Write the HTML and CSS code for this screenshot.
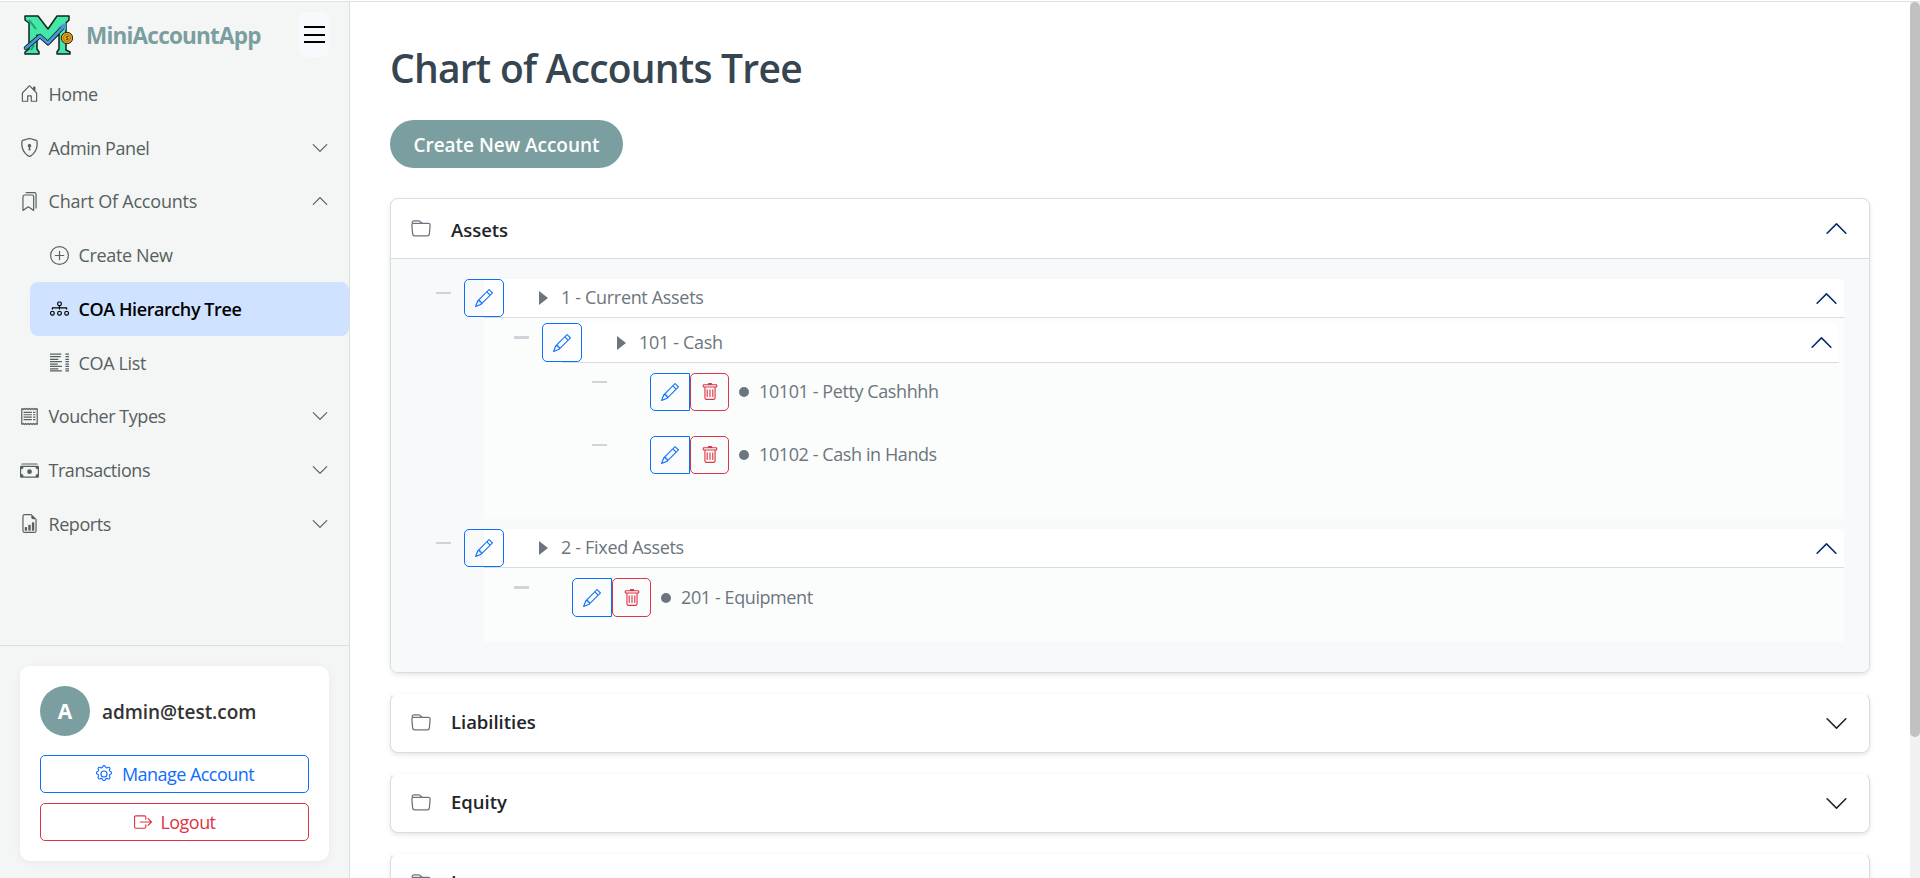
FILE: index.html
```html
<!DOCTYPE html>
<html lang="en">
<head>
<meta charset="utf-8">
<title>Chart of Accounts Tree - MiniAccountApp</title>
<link rel="stylesheet" href="styles.css">
</head>
<body>
<svg class="sprite" aria-hidden="true">
  <symbol id="house" viewBox="0 0 16 16"><path d="M8.354 1.146a.5.5 0 0 0-.708 0l-6 6A.5.5 0 0 0 1.5 7.5v7a.5.5 0 0 0 .5.5h4.5a.5.5 0 0 0 .5-.5v-4h2v4a.5.5 0 0 0 .5.5H14a.5.5 0 0 0 .5-.5v-7a.5.5 0 0 0-.146-.354L13 5.793V2.5a.5.5 0 0 0-.5-.5h-1a.5.5 0 0 0-.5.5v1.293zM2.5 14V7.707l5.5-5.5 5.5 5.5V14H10v-4a.5.5 0 0 0-.5-.5h-3a.5.5 0 0 0-.5.5v4z"/></symbol>
  <symbol id="shield" viewBox="0 0 16 16"><path d="M5.338 1.59a61 61 0 0 0-2.837.856.48.48 0 0 0-.328.39c-.554 4.157.726 7.19 2.253 9.188a10.7 10.7 0 0 0 2.287 2.233c.346.244.652.42.893.533q.18.085.293.118a1 1 0 0 0 .101.025 1 1 0 0 0 .1-.025q.114-.034.294-.118c.24-.113.547-.29.893-.533a10.7 10.7 0 0 0 2.287-2.233c1.527-1.997 2.807-5.031 2.253-9.188a.48.48 0 0 0-.328-.39c-.651-.213-1.75-.56-2.837-.855C9.552 1.29 8.531 1.067 8 1.067c-.53 0-1.552.223-2.662.524zM5.072.56C6.157.265 7.31 0 8 0s1.843.265 2.928.56c1.11.3 2.229.655 2.887.87a1.54 1.54 0 0 1 1.044 1.262c.596 4.477-.787 7.795-2.465 9.99a11.8 11.8 0 0 1-2.517 2.453 7 7 0 0 1-1.048.625c-.28.132-.581.24-.829.24s-.548-.108-.829-.24a7 7 0 0 1-1.048-.625 11.8 11.8 0 0 1-2.517-2.453C1.928 10.487.545 7.169 1.141 2.692A1.54 1.54 0 0 1 2.185 1.43 63 63 0 0 1 5.072.56z"/><path d="M9.5 6.5a1.5 1.5 0 0 1-1 1.415l.385 1.99a.5.5 0 0 1-.491.595h-.788a.5.5 0 0 1-.49-.595l.384-1.99a1.5 1.5 0 1 1 2-1.415z"/></symbol>
  <symbol id="bookmarks" viewBox="0 0 16 16"><path d="M2 4a2 2 0 0 1 2-2h6a2 2 0 0 1 2 2v11.5a.5.5 0 0 1-.777.416L7 13.101l-4.223 2.815A.5.5 0 0 1 2 15.5zm2-1a1 1 0 0 0-1 1v10.566l3.723-2.482a.5.5 0 0 1 .554 0L11 14.566V4a1 1 0 0 0-1-1z"/><path d="M4.268 1H12a1 1 0 0 1 1 1v11.768l.223.148A.5.5 0 0 0 14 13.5V2a2 2 0 0 0-2-2H6a2 2 0 0 0-1.732 1"/></symbol>
  <symbol id="plus" viewBox="0 0 16 16"><path d="M8 15A7 7 0 1 1 8 1a7 7 0 0 1 0 14m0 1A8 8 0 1 0 8 0a8 8 0 0 0 0 16"/><path d="M8 4a.5.5 0 0 1 .5.5v3h3a.5.5 0 0 1 0 1h-3v3a.5.5 0 0 1-1 0v-3h-3a.5.5 0 0 1 0-1h3v-3A.5.5 0 0 1 8 4"/></symbol>
  <symbol id="diagram" viewBox="0 0 16 16"><path fill-rule="evenodd" d="M6 3.5A1.5 1.5 0 0 1 7.500 2h1A1.500 1.500 0 0 1 10 3.500v1A1.500 1.500 0 0 1 8.500 6v1H14a.5.5 0 0 1 .5.5v1a.5.5 0 0 1-1 0V8h-5v.5a.5.5 0 0 1-1 0V8h-5v.5a.5.5 0 0 1-1 0v-1A.5.5 0 0 1 2 7h5.500V6A1.500 1.500 0 0 1 6 4.500zM8.500 5a.5.5 0 0 0 .5-.5v-1a.5.5 0 0 0-.5-.5h-1a.5.5 0 0 0-.5.5v1a.5.5 0 0 0 .5.5z"/><g fill="none" stroke="currentColor"><rect x=".5" y="10.500" width="3" height="3" rx="1"/><rect x="6.500" y="10.500" width="3" height="3" rx="1"/><rect x="12.500" y="10.500" width="3" height="3" rx="1"/></g></symbol>
  <symbol id="list" viewBox="0 0 16 16"><path d="M0 .5h9.500v1H0zM0 2.500h9v1H0zM0 4.800h7v1H0zM0 6.800h10v1H0zM0 8.800h6.500v1H0zM0 10.800h10v1H0zM0 12.800h7v1H0zM0 14.600h10v1H0zM13 .5h3v1h-3zM13 2.500h3v1h-3zM13 4.800h3v1h-3zM13 6.800h3v1h-3zM13 8.800h3v1h-3zM13 10.800h3v1h-3zM13 12.800h3v1h-3zM13 14.600h3v1h-3z"/></symbol>
  <symbol id="receipt" viewBox="0 0 16 16"><path fill="none" stroke="currentColor" d="M1.500 1.200v13.600M14.500 1.200v13.600"/><path fill="none" stroke="currentColor" stroke-width="1.100" d="M1.500 1.300l1.100.8 1.100-.8 1.100.8 1.100-.8 1.100.8 1-.8 1.100.8 1.100-.8 1.100.8 1.100-.8 1.100.8 1-.8M1.500 14.700l1.100-.8 1.100.8 1.100-.8 1.100.8 1.100-.8 1 .8 1.100-.8 1.100.8 1.100-.8 1.100.8 1.100-.8 1 .8"/><path d="M3 4h7v1H3zm0 2h7v1H3zm0 2h7v1H3zm0 2.200h7v1H3zM11 4h2v1h-2zm0 2h2v1h-2zm0 2h2v1h-2zm0 2.200h2v1h-2z"/></symbol>
  <symbol id="cash" viewBox="0 0 16 16"><path d="M1 3a1 1 0 0 1 1-1h12a1 1 0 0 1 1 1zm7 8a2 2 0 1 0 0-4 2 2 0 0 0 0 4"/><path d="M0 5a1 1 0 0 1 1-1h14a1 1 0 0 1 1 1v8a1 1 0 0 1-1 1H1a1 1 0 0 1-1-1zm3 0a2 2 0 0 1-2 2v4a2 2 0 0 1 2 2h10a2 2 0 0 1 2-2V7a2 2 0 0 1-2-2z"/></symbol>
  <symbol id="report" viewBox="0 0 16 16"><path d="M10 13.500a.5.5 0 0 0 .5.5h1a.5.5 0 0 0 .5-.5v-6a.5.5 0 0 0-.5-.5h-1a.5.5 0 0 0-.5.5zm-2.500.5a.5.5 0 0 1-.5-.5v-4a.5.5 0 0 1 .5-.5h1a.5.5 0 0 1 .5.5v4a.5.5 0 0 1-.5.5zm-3 0a.5.5 0 0 1-.5-.5v-2a.5.5 0 0 1 .5-.5h1a.5.5 0 0 1 .5.5v2a.5.5 0 0 1-.5.5z"/><path d="M14 14V4.500L9.500 0H4a2 2 0 0 0-2 2v12a2 2 0 0 0 2 2h8a2 2 0 0 0 2-2M9.500 3A1.500 1.500 0 0 0 11 4.500h2V14a1 1 0 0 1-1 1H4a1 1 0 0 1-1-1V2a1 1 0 0 1 1-1h5.500z"/></symbol>
  <symbol id="gear" viewBox="0 0 16 16"><g fill="none" stroke="currentColor" stroke-linejoin="round"><circle cx="8" cy="8" r="2.700"/><path d="M6.900 1.200q1.100-1.200 2.200 0l.2.500q.5 1.200 1.700.7l.5-.3q1.600-.4 1.800 1.200l-.4.9q-.4 1.100.7 1.600l.5.200q1.300 1 0 2l-.5.3q-1.100.5-.7 1.600l.4.900q0 1.700-1.700 1.600l-.6-.3q-1.200-.5-1.700.6l-.2.600q-1.100 1.300-2.200 0l-.2-.6q-.5-1.100-1.700-.6l-.6.3q-1.600.2-1.700-1.500l.4-.9q.4-1.200-.7-1.700l-.5-.3q-1.300-1 0-2l.5-.2q1.100-.5.7-1.600l-.3-.9q.2-1.600 1.700-1.200l.5.300q1.200.5 1.700-.7z"/></g></symbol>
  <symbol id="logout" viewBox="0 0 16 16"><path fill-rule="evenodd" d="M10 12.500a.5.5 0 0 1-.5.5h-8a.5.5 0 0 1-.5-.5v-9a.5.5 0 0 1 .5-.5h8a.5.5 0 0 1 .5.5v2a.5.5 0 0 0 1 0v-2A1.500 1.500 0 0 0 9.500 2h-8A1.500 1.500 0 0 0 0 3.500v9A1.500 1.500 0 0 0 1.500 14h8a1.500 1.500 0 0 0 1.500-1.500v-2a.5.5 0 0 0-1 0z"/><path fill-rule="evenodd" d="M15.854 8.354a.5.5 0 0 0 0-.708l-3-3a.5.5 0 0 0-.708.708L14.293 7.500H5.500a.5.5 0 0 0 0 1h8.793l-2.147 2.146a.5.5 0 0 0 .708.708z"/></symbol>
  <symbol id="folder" viewBox="0 0 16 16"><path d="M.54 3.870.5 3a2 2 0 0 1 2-2h3.672a2 2 0 0 1 1.414.586l.828.828A2 2 0 0 0 9.828 3h3.982a2 2 0 0 1 1.992 2.181l-.637 7A2 2 0 0 1 13.174 14H2.826a2 2 0 0 1-1.991-1.819l-.637-7a2 2 0 0 1 .342-1.310zM2.190 4a1 1 0 0 0-.996 1.090l.637 7a1 1 0 0 0 .995.910h10.348a1 1 0 0 0 .995-.910l.637-7A1 1 0 0 0 13.810 4zm4.690-1.707A1 1 0 0 0 6.172 2H2.500a1 1 0 0 0-1 .981l.006.139q.323-.119.684-.120h5.396z"/></symbol>
  <symbol id="pencil" viewBox="0 0 16 16"><path d="M12.146.146a.5.5 0 0 1 .708 0l3 3a.5.5 0 0 1 0 .708l-10 10a.5.5 0 0 1-.168.110l-5 2a.5.5 0 0 1-.650-.650l2-5a.5.5 0 0 1 .110-.168zM11.207 2.500 13.500 4.793 14.793 3.500 12.500 1.207zm1.586 3L10.500 3.207 4 9.707V10h.5a.5.5 0 0 1 .5.5v.5h.5a.5.5 0 0 1 .5.5v.5h.293zm-9.761 5.175-.106.106-1.528 3.821 3.821-1.528.106-.106A.5.5 0 0 1 5 12.500V12h-.5a.5.5 0 0 1-.5-.5V11h-.5a.5.5 0 0 1-.468-.325"/></symbol>
  <symbol id="trash" viewBox="0 0 16 16"><path d="M5.500 5.500A.5.5 0 0 1 6 6v6a.5.5 0 0 1-1 0V6a.5.5 0 0 1 .5-.5m2.500 0a.5.5 0 0 1 .5.5v6a.5.5 0 0 1-1 0V6a.5.5 0 0 1 .5-.5m3 .5a.5.5 0 0 0-1 0v6a.5.5 0 0 0 1 0z"/><path d="M14.500 3a1 1 0 0 1-1 1H13v9a2 2 0 0 1-2 2H5a2 2 0 0 1-2-2V4h-.5a1 1 0 0 1-1-1V2a1 1 0 0 1 1-1H6a1 1 0 0 1 1-1h2a1 1 0 0 1 1 1h3.500a1 1 0 0 1 1 1zM4.118 4 4 4.059V13a1 1 0 0 0 1 1h6a1 1 0 0 0 1-1V4.059L11.882 4zM2.500 3h11V2h-11z"/></symbol>
  <symbol id="down" viewBox="0 0 16 16"><path d="M1.646 4.646a.5.5 0 0 1 .708 0L8 10.293l5.646-5.647a.5.5 0 0 1 .708.708l-6 6a.5.5 0 0 1-.708 0l-6-6a.5.5 0 0 1 0-.708"/></symbol>
  <symbol id="up" viewBox="0 0 16 16"><path d="M1.646 11.354a.5.5 0 0 0 .708 0L8 5.707l5.646 5.647a.5.5 0 0 0 .708-.708l-6-6a.5.5 0 0 0-.708 0l-6 6a.5.5 0 0 0 0 .708"/></symbol>
</svg>

<div class="app">
  <aside class="sidebar">
    <header class="brand">
      <svg class="logo" viewBox="0 0 50 42">
        <path d="M2 2h13l10 13 9-13h12v4l-3 3v27l4 2v2H34v-2l2-3V20L25 31 14 21v14l2 3v2H2v-2l4-3V9L2 6z" fill="#43e8a8" stroke="#12231f" stroke-width="1.500" stroke-linejoin="round"/>
        <path d="M6 6l7 9M8 36l3-5" fill="none" stroke="#249c78" stroke-width="2"/>
        <path d="M3 34l14-12 8 7 15-16" fill="none" stroke="#12231f" stroke-width="4.300" stroke-linecap="round" stroke-linejoin="round"/>
        <path d="M3 34l14-12 8 7 15-16" fill="none" stroke="#4797df" stroke-width="2.800" stroke-linecap="round" stroke-linejoin="round"/>
        <path d="M36 12l7-3v7z" fill="#4797df"/>
        <circle cx="44" cy="24" r="5.700" fill="#e3a421" stroke="#30230c"/>
        <circle cx="44" cy="24" r="3.500" fill="none" stroke="#9c6c14" stroke-width=".8"/>
        <path d="M45.500 22.500h-2v1.500h1.500v1.500h-2" fill="none" stroke="#50370c" stroke-width=".8"/>
      </svg>
      <span class="brand-name">MiniAccountApp</span>
      <span class="toggle"><i></i><i></i><i></i></span>
    </header>
    <nav class="nav">
      <a class="item"><svg class="ico"><use href="#house"/></svg><span>Home</span></a>
      <a class="item"><svg class="ico"><use href="#shield"/></svg><span>Admin Panel</span><svg class="chev"><use href="#down"/></svg></a>
      <a class="item expanded"><svg class="ico"><use href="#bookmarks"/></svg><span>Chart Of Accounts</span><svg class="chev"><use href="#up"/></svg></a>
      <a class="item sub"><svg class="ico"><use href="#plus"/></svg><span>Create New</span></a>
      <a class="item sub active"><svg class="ico"><use href="#diagram"/></svg><span>COA Hierarchy Tree</span></a>
      <a class="item sub"><svg class="ico"><use href="#list"/></svg><span>COA List</span></a>
      <a class="item"><svg class="ico"><use href="#receipt"/></svg><span>Voucher Types</span><svg class="chev"><use href="#down"/></svg></a>
      <a class="item"><svg class="ico"><use href="#cash"/></svg><span>Transactions</span><svg class="chev"><use href="#down"/></svg></a>
      <a class="item"><svg class="ico"><use href="#report"/></svg><span>Reports</span><svg class="chev"><use href="#down"/></svg></a>
    </nav>
    <footer class="side-foot">
      <div class="user-card">
        <div class="user"><span class="avatar">A</span><span class="email">admin@test.com</span></div>
        <a class="btn blue"><svg class="ico"><use href="#gear"/></svg><span>Manage Account</span></a>
        <a class="btn red"><svg class="ico"><use href="#logout"/></svg><span>Logout</span></a>
      </div>
    </footer>
  </aside>

  <main class="main">
    <h1 class="title">Chart of Accounts Tree</h1>
    <a class="create"><span>Create New Account</span></a>

    <section class="card open">
      <div class="card-head"><svg class="folder"><use href="#folder"/></svg><span class="name">Assets</span><svg class="arrow"><use href="#up"/></svg></div>
      <div class="tree">
        <div class="branch">
          <div class="bar"><i class="dash"></i><a class="act edit"><svg><use href="#pencil"/></svg></a><i class="caret"></i><span class="label">1 - Current Assets</span><svg class="arrow"><use href="#up"/></svg></div>
          <div class="branch nested">
            <div class="bar"><i class="dash thick"></i><a class="act edit"><svg><use href="#pencil"/></svg></a><i class="caret"></i><span class="label">101 - Cash</span><svg class="arrow"><use href="#up"/></svg></div>
            <div class="leaf"><i class="dash"></i><a class="act edit left"><svg><use href="#pencil"/></svg></a><a class="act del"><svg><use href="#trash"/></svg></a><i class="dot"></i><span class="label">10101 - Petty Cashhhh</span></div>
            <div class="leaf"><i class="dash"></i><a class="act edit left"><svg><use href="#pencil"/></svg></a><a class="act del"><svg><use href="#trash"/></svg></a><i class="dot"></i><span class="label">10102 - Cash in Hands</span></div>
          </div>
        </div>
        <div class="branch">
          <div class="bar"><i class="dash"></i><a class="act edit"><svg><use href="#pencil"/></svg></a><i class="caret"></i><span class="label">2 - Fixed Assets</span><svg class="arrow"><use href="#up"/></svg></div>
          <div class="leaf tall"><i class="dash thick"></i><a class="act edit left"><svg><use href="#pencil"/></svg></a><a class="act del"><svg><use href="#trash"/></svg></a><i class="dot"></i><span class="label">201 - Equipment</span></div>
        </div>
      </div>
    </section>
    <section class="card"><div class="card-head"><svg class="folder"><use href="#folder"/></svg><span class="name">Liabilities</span><svg class="arrow"><use href="#down"/></svg></div></section>
    <section class="card"><div class="card-head"><svg class="folder"><use href="#folder"/></svg><span class="name">Equity</span><svg class="arrow"><use href="#down"/></svg></div></section>
    <section class="card"><div class="card-head"><svg class="folder"><use href="#folder"/></svg><span class="name">Income</span><svg class="arrow"><use href="#down"/></svg></div></section>
  </main>
  <div class="scrollbar"><div class="thumb"></div></div>
</div>
</body>
</html>
```
FILE: styles.css
```css
* { box-sizing: border-box; }
html, body { margin: 0; height: 100%; overflow: hidden; }
body { font-family: "Open Sans", "Noto Sans", sans-serif; font-size: 18px; color: #212529; background: #fff; }
svg { display: block; fill: currentColor; flex: none; }
i { display: block; flex: none; }
.sprite { display: none; }

.app { display: flex; height: 877px; margin-top: 1px; border-top: 1px solid #dde3e1; overflow: hidden; }

/* Sidebar */
.sidebar { width: 350px; height: 876px; flex: none; display: flex; flex-direction: column; background: #f4f6f5; border-right: 1px solid #dadfdf; }
.brand { display: flex; align-items: center; height: 65px; padding: 0 20px 0 23px; }
.logo { width: 50px; height: 42px; }
.brand-name { margin-left: 13px; padding-top: 1px; font-size: 22.5px; font-weight: 700; color: #7b9ea0; letter-spacing: -.78px; white-space: nowrap; }
.toggle { margin-left: auto; width: 30px; height: 45px; border-radius: 8px; background: #f8f9fc; display: flex; flex-direction: column; align-items: center; justify-content: center; gap: 5.500px; }
.toggle i { width: 21px; height: 2px; background: #000; }
.nav { display: flex; flex-direction: column; }
.item { display: flex; align-items: center; height: 53.750px; padding: 0 20px; color: #55605f; letter-spacing: -.45px; white-space: nowrap; }
.item .ico { width: 19px; height: 19px; margin-right: 9.500px; }
.item .chev { width: 18px; height: 18px; margin-left: auto; }
.item.expanded { letter-spacing: -.2px; }
.item.sub { margin-left: 30px; border-radius: 8px; letter-spacing: -.35px; }
.item.active { background: #cfe2ff; color: #000; font-weight: 600; letter-spacing: -.42px; }
.side-foot { margin-top: auto; border-top: 1px solid #dadfe1; padding: 20px 20px 17px; }
.user-card { height: 195px; padding: 20px; border-radius: 10px; background: #fff; box-shadow: 0 2px 10px rgba(0, 0, 0, .05); }
.user { display: flex; align-items: center; gap: 12px; margin-bottom: 19px; }
.avatar { width: 50px; height: 50px; border-radius: 50%; background: #7b9ea0; color: #fff; font-weight: 700; font-size: 21px; display: flex; align-items: center; justify-content: center; }
.email { padding-top: 2px; font-weight: 600; font-size: 19px; letter-spacing: -.05px; color: #333; }
.btn { display: flex; align-items: center; justify-content: center; gap: 9px; height: 38px; border: 1px solid; border-radius: 5px; letter-spacing: -.55px; }
.btn .ico { width: 18px; height: 18px; }
.btn.red { margin-top: 10px; }
.blue { color: #0d6efd; }
.red { color: #dc3545; }

/* Content */
.main { flex: 1; height: 876px; padding: 0 40px; overflow: hidden; }
.title { margin: 38px 0 0; height: 60px; line-height: 56px; font-size: 39px; font-weight: 600; color: #36454f; letter-spacing: -.77px; white-space: nowrap; }
.create { display: flex; align-items: center; justify-content: center; width: 233px; height: 48px; margin-top: 20px; padding-top: 2px; border-radius: 24px; background: #7b9ea0; color: #fff; font-weight: 600; font-size: 19px; letter-spacing: -.03px; white-space: nowrap; }
.card { border: 1px solid #d5dfdd; border-top-color: #fafbfb; border-radius: 8px; background: #fff; margin-bottom: 20px; box-shadow: 0 2px 5px rgba(0, 0, 0, .1); }
.card.open { margin-top: 30px; border-top-color: #d5dfdd; }
.card-head { display: flex; align-items: center; height: 58px; padding: 0 20px; font-weight: 600; font-size: 18.5px; letter-spacing: -.03px; }
.name { padding-bottom: 3px; }
.open .card-head { height: 60px; border-bottom: 1px solid #d5dfdd; }
.open .name { padding: 1px 0 0; }
.folder { width: 20px; height: 20px; margin-right: 20px; color: #6c757d; }
.arrow { width: 25px; height: 25px; margin-left: auto; }
.open .arrow { color: #052c65; }

/* Account tree */
.tree { height: 413px; padding: 20px 25px 30px 93px; background: #f8f9fb; border-radius: 0 0 7px 7px; }
.branch { background: #fbfdfc; height: 113px; }
.branch:first-child { height: 240px; margin-bottom: 10px; }
.bar { display: flex; height: 39px; background: #fff; border-bottom: 1px solid #d5dfdd; border-radius: 0 8px 0 0; padding-right: 5px; }
.bar .arrow { align-self: center; }
.branch .nested { height: 180px; margin: 0 5px 0 78px; padding-top: 5px; }
.nested .bar { height: 40px; }
.dash { width: 15px; height: 2px; background: #ced4da; }
.dash.thick { height: 3px; }
.bar .dash { margin: 13px 13px 0 -48px; }
.act { width: 40px; height: 38px; flex: none; border: 1px solid; border-radius: 5px; display: flex; align-items: center; justify-content: center; }
.act svg { width: 18px; height: 18px; }
.nested .bar .act, .tall .act { height: 39px; }
.edit { color: #0d6efd; }
.del { width: 39px; color: #dc3545; }
.left { border-radius: 5px 0 0 5px; }
.caret { align-self: center; margin: 0 13px 0 35px; border-left: 9px solid #6c757d; border-top: 7px solid transparent; border-bottom: 7px solid transparent; }
.label { align-self: center; padding-bottom: 2px; color: #6c757d; letter-spacing: -.41px; white-space: nowrap; }
.bar .label { letter-spacing: -.33px; }
.leaf { display: flex; height: 38px; margin: 10px 0 25px 30px; }
.leaf.tall { height: 39px; }
.leaf .dash { margin: 8px 43px 0 0; }
.dot { width: 10px; height: 10px; border-radius: 50%; background: #6c757d; align-self: center; margin: 0 10px 0 10px; }

/* Page scrollbar */
.scrollbar { width: 10px; flex: none; background: #f1f1f1; }
.thumb { height: 735px; border-radius: 5px; background: #c1c1c1; }
```
